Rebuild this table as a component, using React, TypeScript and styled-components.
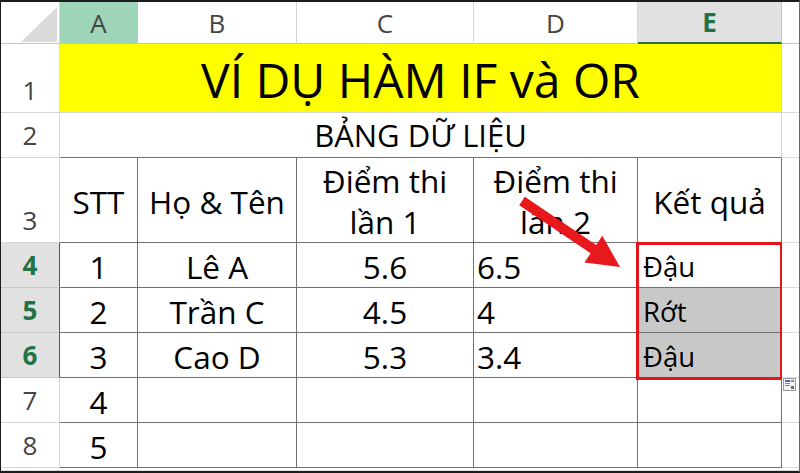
import React from "react";
import styled, { createGlobalStyle, css } from "styled-components";

const Global = createGlobalStyle`
  html, body { margin: 0; padding: 0; background: #ffffff; }
  body { font-family: "Open Sans", "Noto Sans", sans-serif; }
`;

const GREEN = "#217346";
const GRID_LIGHT = "#d6d6d6";
const GRID_DARK = "#707070";

const Frame = styled.div`
  position: relative;
  width: 800px;
  height: 473px;
  box-sizing: border-box;
  border-top: 2px solid #1c1c1c;
  border-left: 1px solid #1c1c1c;
  border-bottom: 2px solid #1c1c1c;
  border-right: 1px solid #6a6a6a;
  overflow: hidden;
  background: #fff;
`;

const Sheet = styled.div`
  display: grid;
  grid-template-columns: 59px 78px 159px 177px 164px 144px 1fr;
  grid-template-rows: 42px 69px 45px 85px repeat(5, 45px) 1fr;
  width: 100%;
  height: 100%;
`;

const Corner = styled.div`
  position: relative;
  box-sizing: border-box;
  border-right: 1px solid ${GRID_LIGHT};
  border-bottom: 1px solid #c4c4c4;
  background: #fff;
  &::after {
    content: "";
    position: absolute;
    left: 20px;
    top: 5px;
    width: 36px;
    height: 35px;
    background: #dadada;
    clip-path: polygon(100% 0, 100% 100%, 0 100%);
  }
`;

type HeaderKind = "plain" | "mint" | "active";

const ColHeader = styled.div<{ $kind?: HeaderKind }>`
  box-sizing: border-box;
  display: flex;
  align-items: center;
  justify-content: center;
  font-size: 26px;
  line-height: 1;
  color: #444;
  background: #fff;
  border-right: 1px solid ${GRID_LIGHT};
  border-bottom: 1px solid #c4c4c4;
  ${(p) =>
    p.$kind === "mint" &&
    css`
      background: #9fd5b9;
      border-right-color: #9fd5b9;
    `}
  ${(p) =>
    p.$kind === "active" &&
    css`
      background: #e1e1e1;
      color: ${GREEN};
      font-weight: 700;
      border-bottom: 2px solid ${GREEN};
      border-right-color: #c4c4c4;
    `}
`;

const RowHeader = styled.div<{ $selected?: boolean }>`
  box-sizing: border-box;
  display: flex;
  align-items: flex-end;
  justify-content: center;
  padding-bottom: 9px;
  font-size: 26px;
  line-height: 1;
  color: #444;
  background: #fff;
  border-right: 1px solid ${GRID_LIGHT};
  border-bottom: 1px solid ${GRID_LIGHT};
  ${(p) =>
    p.$selected &&
    css`
      background: #e1e1e1;
      color: ${GREEN};
      font-weight: 700;
      border-right-color: ${GREEN};
      border-bottom-color: #c9c9c9;
    `}
`;

const TitleCell = styled.div`
  grid-column: span 5;
  box-sizing: border-box;
  display: flex;
  align-items: center;
  justify-content: center;
  padding-top: 4px;
  background: #ffff00;
  border-right: 1px solid ${GRID_LIGHT};
  border-bottom: 1px solid ${GRID_LIGHT};
  font-size: 48px;
  line-height: 1;
  color: #000;
`;

const SubtitleCell = styled.div`
  grid-column: span 5;
  box-sizing: border-box;
  display: flex;
  align-items: center;
  justify-content: center;
  border-right: 1px solid ${GRID_LIGHT};
  border-bottom: 1px solid ${GRID_DARK};
  font-size: 31px;
  line-height: 1;
  color: #000;
`;

const Cell = styled.div<{ $align?: "center" | "left" }>`
  box-sizing: border-box;
  display: flex;
  flex-direction: column;
  align-items: ${(p) => (p.$align === "left" ? "flex-start" : "center")};
  justify-content: center;
  text-align: ${(p) => (p.$align === "left" ? "left" : "center")};
  padding: 2px 0 0 ${(p) => (p.$align === "left" ? "3px" : "0")};
  font-size: 31.5px;
  line-height: 41px;
  color: #000;
  white-space: nowrap;
  background: #fff;
  border-right: 1px solid ${GRID_DARK};
  border-bottom: 1px solid ${GRID_DARK};
`;

const ResultCell = styled.div<{ $row: number; $shade?: boolean }>`
  grid-column: 6;
  grid-row: ${(p) => p.$row};
  box-sizing: border-box;
  display: flex;
  align-items: center;
  padding: 2px 0 0 5px;
  font-size: 27.5px;
  line-height: 41px;
  color: #000;
  white-space: nowrap;
  background: ${(p) => (p.$shade ? "#c8c8c8" : "#fff")};
  border-right: 1px solid ${GRID_DARK};
  border-bottom: 1px solid ${GRID_DARK};
`;

const Filler = styled.div<{ $top?: boolean }>`
  box-sizing: border-box;
  position: relative;
  background: #fff;
  border-bottom: 1px solid ${(p) => (p.$top ? "#c4c4c4" : "#dcdcdc")};
`;

const QuickIcon = styled.svg`
  position: absolute;
  left: 1px;
  top: 0px;
`;

const SelectionBox = styled.div`
  grid-column: 6;
  grid-row: 5 / 8;
  margin: -1px -1px -2px -2px;
  border: 3px solid #e0161c;
  pointer-events: none;
`;

const ArrowLayer = styled.svg`
  position: absolute;
  left: -1px;
  top: -2px;
  pointer-events: none;
`;

type Row = {
  n: number;
  stt: string;
  name: string;
  c: string;
  d: string;
  e: string;
  selected?: boolean;
  shade?: boolean;
};

const rows: Row[] = [
  { n: 4, stt: "1", name: "Lê A", c: "5.6", d: "6.5", e: "Đậu", selected: true },
  { n: 5, stt: "2", name: "Trần C", c: "4.5", d: "4", e: "Rớt", selected: true, shade: true },
  { n: 6, stt: "3", name: "Cao D", c: "5.3", d: "3.4", e: "Đậu", selected: true, shade: true },
  { n: 7, stt: "4", name: "", c: "", d: "", e: "" },
  { n: 8, stt: "5", name: "", c: "", d: "", e: "" },
];

export default function App() {
  return (
    <>
      <Global />
      <Frame>
        <Sheet>
          <Corner />
          <ColHeader $kind="mint">A</ColHeader>
          <ColHeader>B</ColHeader>
          <ColHeader>C</ColHeader>
          <ColHeader>D</ColHeader>
          <ColHeader $kind="active">E</ColHeader>
          <Filler $top />

          <RowHeader>1</RowHeader>
          <TitleCell>VÍ DỤ HÀM IF và OR</TitleCell>
          <Filler />

          <RowHeader>2</RowHeader>
          <SubtitleCell>BẢNG DỮ LIỆU</SubtitleCell>
          <Filler />

          <RowHeader>3</RowHeader>
          <Cell>STT</Cell>
          <Cell>Họ &amp; Tên</Cell>
          <Cell>
            <span>Điểm thi</span>
            <span>lần 1</span>
          </Cell>
          <Cell>
            <span>Điểm thi</span>
            <span>lần 2</span>
          </Cell>
          <Cell>Kết quả</Cell>
          <Filler />

          {rows.map((r) => (
            <React.Fragment key={r.n}>
              <RowHeader $selected={r.selected}>{r.n}</RowHeader>
              <Cell>{r.stt}</Cell>
              <Cell>{r.name}</Cell>
              <Cell>{r.c}</Cell>
              <Cell $align="left">{r.d}</Cell>
              <ResultCell $row={r.n + 1} $shade={r.shade}>
                {r.e}
              </ResultCell>
              <Filler>
                {r.n === 7 && (
                  <QuickIcon width="13" height="13" viewBox="0 0 13 13">
                    <rect x="0.5" y="0.5" width="12" height="12" fill="#f4f4f4" stroke="#9a9a9a" />
                    <rect x="2" y="2" width="5" height="2" fill="#3a6fc4" />
                    <rect x="2" y="5" width="5" height="1" fill="#8a8a8a" />
                    <rect x="2" y="7" width="5" height="1" fill="#8a8a8a" />
                    <rect x="8" y="2" width="3" height="2" fill="#8a8a8a" />
                    <rect x="8" y="8" width="3" height="3" fill="#6a6a6a" />
                  </QuickIcon>
                )}
              </Filler>
            </React.Fragment>
          ))}

          <Filler />
          <Filler />
          <Filler />
          <Filler />
          <Filler />
          <Filler />
          <Filler />

          <SelectionBox />
        </Sheet>
        <ArrowLayer width="800" height="473" viewBox="0 0 800 473">
          <polygon
            points="524.8,196.8 596.2,244.9 602.3,235.8 620,267 584.5,262.4 590.6,253.3 519.2,205.2"
            fill="#e8191c"
          />
        </ArrowLayer>
      </Frame>
    </>
  );
}
